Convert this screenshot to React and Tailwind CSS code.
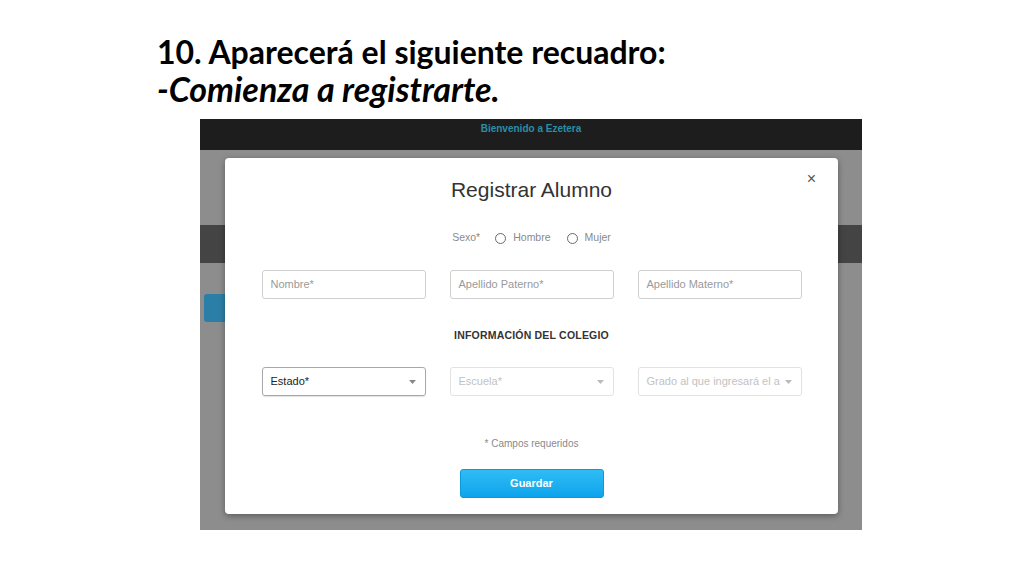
import React from "react";

function Field({ label }) {
  return (
    <div className="w-[164px] h-[29px] border border-[#cfcfcf] rounded-[3px] flex items-center px-[8px] text-[11px] text-[#9a9a9a]">
      {label}
    </div>
  );
}

function Select({ label, active }) {
  return (
    <div
      className={
        active
          ? "w-[164px] h-[29px] border border-[#a8a8a8] rounded-[3px] flex items-center justify-between pl-[8px] pr-[9px] text-[11px] text-[#222] shadow-[0_1px_1px_rgba(0,0,0,0.12)]"
          : "w-[164px] h-[29px] border border-[#e2e2e2] rounded-[3px] flex items-center justify-between pl-[8px] pr-[9px] text-[11px] text-[#c2c2c2]"
      }
    >
      <span className="whitespace-nowrap">{label}</span>
      <svg width="7" height="4" viewBox="0 0 7 4" className="shrink-0 ml-1">
        <path d="M0 0 L7 0 L3.5 4 Z" fill={active ? "#888" : "#bbb"} />
      </svg>
    </div>
  );
}

function Radio({ label }) {
  return (
    <div className="flex items-center gap-[7px]">
      <span className="w-[11px] h-[11px] rounded-full border-[1.5px] border-[#6b6b6b] bg-white" />
      <span>{label}</span>
    </div>
  );
}

export default function App() {
  return (
    <div className="w-[1024px] h-[576px] bg-white overflow-hidden" style={{ fontFamily: '"Liberation Sans", Arial, sans-serif' }}>
      <div className="pl-[157px] pt-[33px] text-black font-bold text-[32px] leading-[37px]" style={{ fontFamily: 'Lato, "Open Sans", sans-serif' }}>
        <div>10. Aparecerá el siguiente recuadro:</div>
        <div className="italic text-[34px]">-Comienza a registrarte.</div>
      </div>

      <div className="ml-[200px] mt-[12px] relative w-[662px] h-[411px] bg-[#8d8d8d]">
        <div className="h-[31px] bg-[#1d1d1d] flex justify-center pt-[2px]">
          <span className="text-[10px] font-bold text-[#2b8ea6]">Bienvenido a Ezetera</span>
        </div>
        <div className="h-[75px]" />
        <div className="h-[38px] bg-[#444444]" />
        <div className="h-[31px]" />
        <div className="ml-[4px] w-[24px] h-[28px] rounded-[3px] bg-[#2b7fa6]" />

        <div className="absolute left-[25px] top-[39px] w-[613px] h-[356px] bg-white rounded-[4px] shadow-[0_2px_6px_rgba(0,0,0,0.35)] flex flex-col items-center">
          <div className="absolute right-[22px] top-[13px] text-[#555] text-[16px] leading-[16px]">×</div>
          <div className="mt-[20px] text-[21px] leading-[24px] text-[#333]">Registrar Alumno</div>
          <div className="mt-[28px] h-[16px] flex items-center gap-[16px] text-[10.5px] text-[#8a8a8a]">
            <span className="mr-[-1px]">Sexo*</span>
            <Radio label="Hombre" />
            <Radio label="Mujer" />
          </div>
          <div className="mt-[24px] flex gap-[24px]">
            <Field label="Nombre*" />
            <Field label="Apellido Paterno*" />
            <Field label="Apellido Materno*" />
          </div>
          <div className="mt-[29px] h-[14px] text-[10.5px] font-bold text-[#333] tracking-[0.2px]">INFORMACIÓN DEL COLEGIO</div>
          <div className="mt-[25px] flex gap-[24px]">
            <Select label="Estado*" active />
            <Select label="Escuela*" />
            <Select label="Grado al que ingresará el a" />
          </div>
          <div className="mt-[40px] h-[14px] text-[10px] text-[#8a8a8a]">* Campos requeridos</div>
          <div className="mt-[19px] w-[144px] h-[29px] rounded-[3px] bg-gradient-to-b from-[#2fbcf5] to-[#0aa4ec] border border-[#0c9ad8] flex items-center justify-center text-white text-[11px] font-bold">
            Guardar
          </div>
        </div>
      </div>
    </div>
  );
}
